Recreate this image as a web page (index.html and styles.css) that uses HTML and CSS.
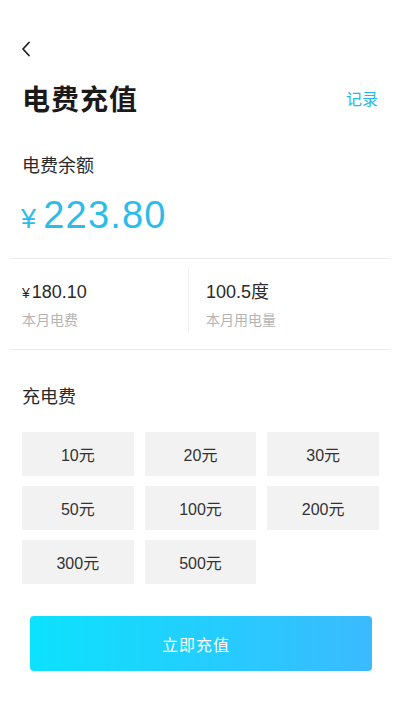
FILE: index.html
```html
<!DOCTYPE html>
<html lang="zh-CN">
<head>
    <meta charset="UTF-8">
    <meta name="viewport" content="width=device-width, initial-scale=1.0">
    <title>电费充值</title>
    <link rel="stylesheet" href="styles.css">
</head>
<body>
    <div class="nav">
        <a href="#" class="back">
            <svg width="10" height="16" viewBox="0 0 10 16"><path d="M8 1.5L2 8l6 6.5" fill="none" stroke="#222" stroke-width="1.8" stroke-linecap="round" stroke-linejoin="round"/></svg>
        </a>
    </div>
    <div class="head">
        <h1 class="title">电费充值</h1>
        <a href="#" class="record">记录</a>
    </div>

    <div class="balance-label">电费余额</div>
    <div class="balance"><span class="yen">¥</span>223.80</div>

    <div class="stats">
        <div class="stat">
            <div class="stat-value"><span class="yen-s">¥</span>180.10</div>
            <div class="stat-label">本月电费</div>
        </div>
        <div class="stat stat-right">
            <div class="stat-value">100.5度</div>
            <div class="stat-label">本月用电量</div>
        </div>
    </div>

    <div class="section-title">充电费</div>
    <div class="amounts">
        <div class="amount">10元</div>
        <div class="amount">20元</div>
        <div class="amount">30元</div>
        <div class="amount">50元</div>
        <div class="amount">100元</div>
        <div class="amount">200元</div>
        <div class="amount">300元</div>
        <div class="amount">500元</div>
    </div>

    <div class="submit-wrap">
        <button class="submit">立即充值</button>
    </div>
</body>
</html>
```

FILE: styles.css
```css
html,body{
    margin: 0;
    padding: 0;
    background: #ffffff;
    color: #222222;
    font-family: "Liberation Sans", "Noto Sans CJK SC", sans-serif;
}
a{
    text-decoration: none;
}
.nav{
    height: 70px;
    padding: 41px 0 0 21px;
    box-sizing: border-box;
}
.back{
    display: block;
    width: 10px;
    height: 16px;
}
.back svg{
    display: block;
}
.head{
    display: flex;
    justify-content: space-between;
    align-items: center;
    height: 56px;
    padding: 0 22px 0 22px;
}
.title{
    margin: 0;
    font-size: 28px;
    font-weight: bold;
    letter-spacing: 1px;
    color: #1a1a1a;
}
.record{
    font-size: 16px;
    color: #28b6e4;
}
.balance-label{
    margin-top: 24px;
    padding-left: 22px;
    height: 32px;
    line-height: 32px;
    font-size: 18px;
    color: #2a2a2a;
}
.balance{
    margin-top: 8px;
    padding-left: 21px;
    height: 50px;
    line-height: 50px;
    font-size: 38px;
    letter-spacing: 1.2px;
    color: #2cbcea;
}
.yen{
    font-size: 27px;
    margin-right: 6px;
}
.stats{
    display: grid;
    grid-template-columns: 178px 1fr;
    margin: 18px 10px 0;
    padding: 9px 0 16px;
    border-top: 1px solid #ececec;
    border-bottom: 1px solid #ececec;
}
.stat{
    height: 65px;
    padding: 13px 0 0 12px;
    box-sizing: border-box;
}
.stat-right{
    border-left: 1px solid #f0f0f0;
    padding-left: 17px;
}
.stat-value{
    height: 22px;
    line-height: 22px;
    font-size: 18px;
    color: #2a2a2a;
}
.yen-s{
    font-size: 14px;
    margin-right: 2px;
}
.stat-label{
    margin-top: 7px;
    height: 20px;
    line-height: 20px;
    font-size: 14px;
    color: #b4b4b4;
}
.section-title{
    margin-top: 32px;
    padding-left: 22px;
    height: 30px;
    line-height: 30px;
    font-size: 18px;
    color: #2a2a2a;
}
.amounts{
    display: grid;
    grid-template-columns: repeat(3, 1fr);
    grid-auto-rows: 44px;
    gap: 10px 11px;
    margin-top: 20px;
    padding: 0 21px 0 22px;
}
.amount{
    display: flex;
    align-items: center;
    justify-content: center;
    background: #f2f2f2;
    font-size: 16px;
    color: #333333;
}
.submit-wrap{
    margin-top: 32px;
    padding: 0 28px 0 30px;
}
.submit{
    display: block;
    width: 100%;
    height: 55px;
    border: 0;
    border-radius: 4px;
    background: linear-gradient(to right, #0ce2fd, #3bbaff);
    color: #ffffff;
    font-family: "Liberation Sans", "Noto Sans CJK SC", sans-serif;
    font-size: 16px;
    letter-spacing: 1px;
    padding-right: 16px;
}
```
